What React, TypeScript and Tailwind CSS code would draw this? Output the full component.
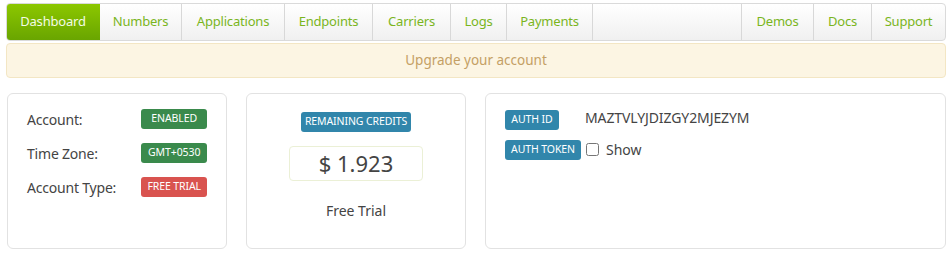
import { useState } from "react";

const LEFT_TABS: [string, string][] = [
  ["Dashboard", "w-[94px]"],
  ["Numbers", "w-[82px]"],
  ["Applications", "w-[103px]"],
  ["Endpoints", "w-[88px]"],
  ["Carriers", "w-[78px]"],
  ["Logs", "w-[56px]"],
  ["Payments", "w-[86px]"],
];
const RIGHT_TABS: [string, string][] = [
  ["Demos", "w-[72px]"],
  ["Docs", "w-[58px]"],
  ["Support", "w-[74px]"],
];

function Badge({ children, color, className = "" }: { children: React.ReactNode; color: string; className?: string }) {
  return (
    <span
      className={`inline-flex h-[20px] items-center justify-center whitespace-nowrap rounded-[3px] text-[10.5px] uppercase tracking-[-0.1px] text-white ${color} ${className}`}
    >
      {children}
    </span>
  );
}

export default function App() {
  const [show, setShow] = useState(false);

  return (
    <div className="h-[260px] w-[947px] bg-white pl-[6px] pr-[1px] pt-[3px] text-[#444] [font-family:'Noto_Sans',sans-serif]">
      {/* Nav */}
      <nav className="flex h-[38px] overflow-hidden rounded-[4px] border border-[#dadada] bg-gradient-to-b from-white to-[#f0f0f0]">
        {LEFT_TABS.map(([t, w], i) => (
          <a
            key={t}
            href="#"
            className={
              i === 0
                ? `-my-px -ml-px flex items-center justify-center rounded-l-[4px] bg-gradient-to-b from-[#8dc800] to-[#68a400] text-[13px] tracking-[-0.2px] text-[#f4fbe6] ${w}`
                : `flex items-center justify-center border-r border-[#d8d8d8] text-[13px] tracking-[-0.2px] text-[#7ab51d] ${w}`
            }
          >
            {t}
          </a>
        ))}
        <div className="flex-1" />
        {RIGHT_TABS.map(([t, w]) => (
          <a
            key={t}
            href="#"
            className={`flex items-center justify-center border-l border-[#d8d8d8] text-[13px] tracking-[-0.2px] text-[#7ab51d] ${w}`}
          >
            {t}
          </a>
        ))}
      </nav>

      {/* Banner */}
      <div className="mt-[2px] flex h-[35px] items-center justify-center rounded-[4px] border border-[#f3e6c4] bg-[#fcf5e3] text-[13.5px] text-[#c4a065]">
        Upgrade your account
      </div>

      {/* Cards */}
      <div className="mt-[15px] flex gap-[19px] pl-[1px]">
        <div className="h-[156px] w-[220px] rounded-[6px] border border-[#e2e2e2] px-[19px] pt-[15px]">
          {[
            ["Account:", "ENABLED", "bg-[#3a8a4c]"],
            ["Time Zone:", "GMT+0530", "bg-[#3a8a4c]"],
            ["Account Type:", "FREE TRIAL", "bg-[#d9534f]"],
          ].map(([label, val, c]) => (
            <div key={label} className="mb-[14px] flex h-[20px] items-center">
              <span className="w-[115px] text-[14px] tracking-[-0.2px] text-[#444]">{label}</span>
              <Badge color={c} className="w-[66px]">
                {val}
              </Badge>
            </div>
          ))}
        </div>

        <div className="flex h-[156px] w-[220px] flex-col items-center rounded-[6px] border border-[#e2e2e2] pt-[18px]">
          <Badge color="bg-[#3186ab]" className="w-[110px]">
            Remaining Credits
          </Badge>
          <div className="mt-[14px] flex h-[35px] w-[134px] items-center justify-center rounded-[4px] border border-[#ebf0d6] text-[22px] text-[#444]">
            $ 1.923
          </div>
          <div className="mt-[19px] text-[14px] text-[#444]">Free Trial</div>
        </div>

        <div className="h-[156px] flex-1 rounded-[6px] border border-[#e2e2e2] pl-[19px] pt-[16px]">
          <div className="flex items-center">
            <Badge color="bg-[#3186ab]" className="w-[54px]">
              Auth ID
            </Badge>
            <span className="-mt-[5px] ml-[26px] text-[14px] tracking-[-0.1px] text-[#444]">MAZTVLYJDIZGY2MJEZYM</span>
          </div>
          <div className="mt-[9px] flex items-center">
            <Badge color="bg-[#3186ab]" className="w-[76px]">
              Auth Token
            </Badge>
            <input
              type="checkbox"
              checked={show}
              onChange={(e) => setShow(e.target.checked)}
              className="ml-[5px] h-[13px] w-[13px]"
            />
            <span className="ml-[7px] text-[14px] text-[#444]">Show</span>
          </div>
        </div>
      </div>
    </div>
  );
}
